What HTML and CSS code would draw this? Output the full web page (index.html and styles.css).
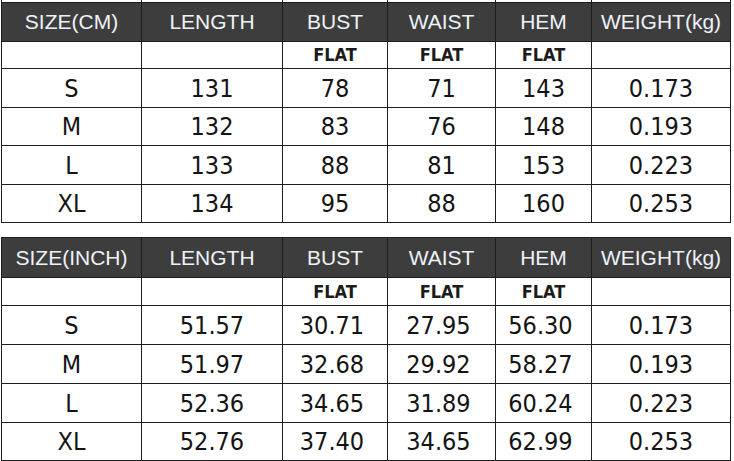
FILE: index.html
```html
<!DOCTYPE html>
<html>
<head>
<meta charset="utf-8">
<link rel="stylesheet" href="styles.css">
</head>
<body>
<div class="page">
  <div class="table t1">
    <div class="stub"></div><div class="stub"></div><div class="stub"></div><div class="stub"></div><div class="stub"></div><div class="stub"></div>
    <div class="hd">SIZE(CM)</div><div class="hd">LENGTH</div><div class="hd">BUST</div><div class="hd">WAIST</div><div class="hd">HEM</div><div class="hd">WEIGHT(kg)</div>
    <div class="fl"></div><div class="fl"></div><div class="fl">FLAT</div><div class="fl">FLAT</div><div class="fl">FLAT</div><div class="fl"></div>
    <div class="c">S</div><div class="c">131</div><div class="c">78</div><div class="c">71</div><div class="c">143</div><div class="c">0.173</div>
    <div class="c">M</div><div class="c">132</div><div class="c">83</div><div class="c">76</div><div class="c">148</div><div class="c">0.193</div>
    <div class="c">L</div><div class="c">133</div><div class="c">88</div><div class="c">81</div><div class="c">153</div><div class="c">0.223</div>
    <div class="c">XL</div><div class="c">134</div><div class="c">95</div><div class="c">88</div><div class="c">160</div><div class="c">0.253</div>
  </div>
  <div class="table t2">
    <div class="hd">SIZE(INCH)</div><div class="hd">LENGTH</div><div class="hd">BUST</div><div class="hd">WAIST</div><div class="hd">HEM</div><div class="hd">WEIGHT(kg)</div>
    <div class="fl"></div><div class="fl"></div><div class="fl">FLAT</div><div class="fl">FLAT</div><div class="fl">FLAT</div><div class="fl"></div>
    <div class="c">S</div><div class="c">51.57</div><div class="c n">30.71</div><div class="c n">27.95</div><div class="c n">56.30</div><div class="c">0.173</div>
    <div class="c">M</div><div class="c">51.97</div><div class="c n">32.68</div><div class="c n">29.92</div><div class="c n">58.27</div><div class="c">0.193</div>
    <div class="c">L</div><div class="c">52.36</div><div class="c n">34.65</div><div class="c n">31.89</div><div class="c n">60.24</div><div class="c">0.223</div>
    <div class="c">XL</div><div class="c">52.76</div><div class="c n">37.40</div><div class="c n">34.65</div><div class="c n">62.99</div><div class="c">0.253</div>
  </div>
</div>
</body>
</html>
```
FILE: styles.css
```css
html, body {
  margin: 0;
  padding: 0;
  background: #ffffff;
}
.page {
  width: 734px;
  height: 461px;
  padding-left: 1px;
  box-sizing: border-box;
  display: flex;
  flex-direction: column;
  gap: 14px;
  overflow: hidden;
}
.table {
  display: grid;
  grid-template-columns: 139px 140px 104px 107px 95px 138px;
  gap: 1px;
  background: #1e1e1e;
  width: 730px;
  box-sizing: border-box;
  border: 1px solid #1e1e1e;
}
.t1 {
  border-top: 0;
  grid-template-rows: 2px 38px 26px 38px 37px 38px 37px;
}
.t2 {
  grid-template-rows: 39px 27px 38px 38px 38px 37px;
}
.stub {
  background: #ffffff;
}
.hd {
  background: #3d3d3d;
  color: #eef2f8;
  font-family: "Liberation Sans", Arial, sans-serif;
  font-size: 21px;
  display: flex;
  align-items: center;
  justify-content: center;
  white-space: nowrap;
}
.fl {
  background: #ffffff;
  color: #1c1c1c;
  font-family: "DejaVu Sans Condensed", "DejaVu Sans", sans-serif;
  font-weight: bold;
  font-size: 18px;
  padding-bottom: 1px;
  display: flex;
  align-items: center;
  justify-content: center;
}
.c {
  background: #ffffff;
  color: #141414;
  font-family: "DejaVu Sans Condensed", "DejaVu Sans", sans-serif;
  font-size: 25px;
  display: flex;
  align-items: center;
  justify-content: center;
  white-space: nowrap;
}
.c.n {
  padding-right: 6px;
}
```
